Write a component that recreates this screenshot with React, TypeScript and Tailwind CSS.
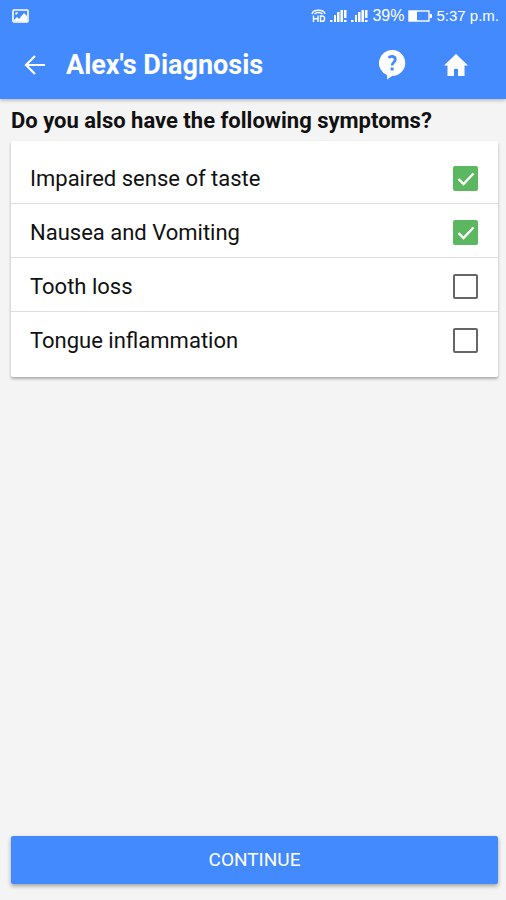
import React, { useState } from 'react';

interface Symptom {
    id: string;
    label: string;
    checked: boolean;
}

const initialSymptoms: Symptom[] = [
    { id: 'taste', label: 'Impaired sense of taste', checked: true },
    { id: 'nausea', label: 'Nausea and Vomiting', checked: true },
    { id: 'tooth', label: 'Tooth loss', checked: false },
    { id: 'tongue', label: 'Tongue inflammation', checked: false },
];

const SignalIcon = () => (
    <svg width="17" height="14" viewBox="0 0 17 14" fill="currentColor" aria-hidden="true">
        <path d="M0 11h2.500v2H0zM4 6h2v7H4zM7 3h2.500v10H7zM10.500 1h2.500v12h-2.500zM14 1h2.500v8h-2.500zM14 11h2.500v2h-2.500z" />
    </svg>
);

const StatusBar = () => (
    <div className="flex h-8 items-center justify-between px-3 pr-[7px] text-white">
        <svg width="17" height="14" viewBox="0 0 17 14" aria-hidden="true">
            <rect x="1" y="1" width="15" height="12" rx="1" fill="none" stroke="currentColor" strokeWidth="1.6" />
            <path d="M2 12V11l3-3 2 2 5-6 3 3v6z" fill="currentColor" />
            <path d="M3 4l2-1 1 1-2 2z" fill="currentColor" />
        </svg>
        <div className="flex items-center gap-1">
            <svg width="15" height="14" viewBox="0 0 15 14" fill="none" stroke="currentColor" strokeWidth="1.4" aria-hidden="true">
                <path d="M1 5C2 0 13 0 14 5M3.500 5c2-2 6-2 8 0" />
                <path d="M2.500 6.500v6.500M7 6.500v6.500M2.500 9.700h4.500M9.500 7v5.300h1.500c3.500 0 3.500-5.300 0-5.300z" />
            </svg>
            <SignalIcon />
            <SignalIcon />
            <span className="font-['Liberation_Sans',sans-serif] text-base">39%</span>
            <svg width="24" height="12" viewBox="0 0 24 12" aria-hidden="true">
                <rect x="1" y="1" width="20" height="10" fill="none" stroke="currentColor" strokeWidth="1.4" />
                <path d="M1 1h8v10H1zM22 4h2v4h-2z" fill="currentColor" />
            </svg>
            <span className="font-['Liberation_Sans',sans-serif] text-[15px]">5:37 p.m.</span>
        </div>
    </div>
);

const Header = () => (
    <header className="bg-[#448aff] shadow-[0_1px_4px_rgba(0,0,0,0.3)]">
        <StatusBar />
        <div className="flex h-[67px] items-center pr-[37px] pb-0.5 pl-6 text-white">
            <button type="button" aria-label="Back">
                <svg width="22" height="22" viewBox="0 0 22 22" fill="none" stroke="currentColor" strokeWidth="2.200" aria-hidden="true">
                    <path d="M21 11H3M11 2l-9 9 9 9" />
                </svg>
            </button>
            <h1 className="ml-5 flex-1 text-[27px] leading-8 font-bold">Alex's Diagnosis</h1>
            <button type="button" aria-label="Help">
                <svg width="28" height="30" viewBox="0 0 28 30" aria-hidden="true">
                    <path d="M13.500 0a13 13 0 1 1-0.500 26l-5 3.500V25A13 13 0 0 1 13.500 0z" fill="currentColor" />
                    <path d="M9.800 8c1-2 6.500-2.500 6.500 1.500 0 3-3.200 2.500-3.200 6" fill="none" stroke="#448aff" strokeWidth="2.800" />
                    <rect x="11.600" y="17.500" width="3" height="3" fill="#448aff" />
                </svg>
            </button>
            <button type="button" aria-label="Home" className="ml-9">
                <svg width="26" height="22" viewBox="0 0 26 22" fill="currentColor" aria-hidden="true">
                    <path d="M13 0L1 11.500h3.500V22h6.500v-7h4v7h6.500V11.500H25L13 0z" />
                </svg>
            </button>
        </div>
    </header>
);

const App: React.FC = () => {
    const [symptoms, setSymptoms] = useState<Symptom[]>(initialSymptoms);

    const toggle = (id: string) => {
        setSymptoms(symptoms.map(s => (s.id === id ? { ...s, checked: !s.checked } : s)));
    };

    return (
        <div className="flex min-h-screen flex-col bg-[#f4f4f4] font-[Roboto,sans-serif]">
            <Header />
            <main className="flex flex-1 flex-col pt-2 pr-2 pb-4 pl-[11px]">
                <h2 className="text-[22px] leading-7 font-bold text-[#111111]">
                    Do you also have the following symptoms?
                </h2>
                <ul className="mt-[6px] rounded-xs bg-white pt-[9px] pb-3 shadow-[0_2px_3px_rgba(0,0,0,0.3)]">
                    {symptoms.map(symptom => (
                        <li key={symptom.id} className="border-b border-[#dedede] last:border-b-0">
                            <label
                                htmlFor={symptom.id}
                                className="flex h-[53px] items-center justify-between pt-1 pr-5 pl-[19px] text-[22px] text-[#111111]"
                            >
                                {symptom.label}
                                <span className="grid place-items-center">
                                    <input
                                        id={symptom.id}
                                        type="checkbox"
                                        checked={symptom.checked}
                                        onChange={() => toggle(symptom.id)}
                                        className="peer col-start-1 row-start-1 size-[25px] appearance-none rounded-xs border-2 border-[#666666] checked:border-[#5cb860] checked:bg-[#5cb860]"
                                    />
                                    <svg
                                        className="pointer-events-none invisible col-start-1 row-start-1 text-white peer-checked:visible"
                                        width="18"
                                        height="14"
                                        viewBox="0 0 18 14"
                                        fill="none"
                                        stroke="currentColor"
                                        strokeWidth="2.400"
                                        aria-hidden="true"
                                    >
                                        <path d="M1.500 7l5 5L16.500 1.500" />
                                    </svg>
                                </span>
                            </label>
                        </li>
                    ))}
                </ul>
                <button
                    type="button"
                    className="mt-auto h-12 rounded-xs bg-[#448aff] text-[19px] text-white shadow-[0_2px_4px_rgba(0,0,0,0.35)]"
                >
                    CONTINUE
                </button>
            </main>
        </div>
    );
};

export default App;
